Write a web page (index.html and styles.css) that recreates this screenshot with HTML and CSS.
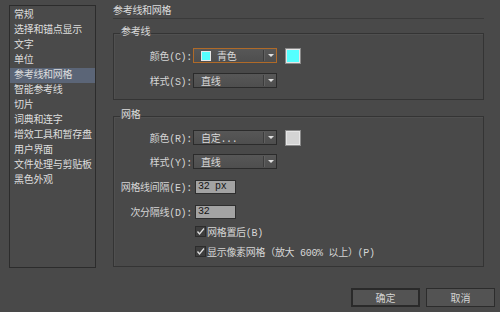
FILE: index.html
```html
<!DOCTYPE html>
<html>
<head>
<meta charset="UTF-8">
<title>首选项 - 参考线和网格</title>
<link rel="stylesheet" href="styles.css">
</head>
<body>

<div class="dialog">
	<div class="top">
		<ul class="sidebar">
			<li>常规</li>
			<li>选择和锚点显示</li>
			<li>文字</li>
			<li>单位</li>
			<li class="on">参考线和网格</li>
			<li>智能参考线</li>
			<li>切片</li>
			<li>词典和连字</li>
			<li>增效工具和暂存盘</li>
			<li>用户界面</li>
			<li>文件处理与剪贴板</li>
			<li>黑色外观</li>
		</ul>

		<div class="main">
			<div class="title">参考线和网格</div>

			<fieldset class="group g1">
				<legend>参考线</legend>
				<div class="row">
					<span class="lbl">颜色(C):</span>
					<div class="select focus"><i class="chip cyan"></i><span class="val">青色</span><b class="arrow"></b></div>
					<span class="swatch cyan"></span>
				</div>
				<div class="row r2">
					<span class="lbl">样式(S):</span>
					<div class="select"><span class="val">直线</span><b class="arrow"></b></div>
				</div>
			</fieldset>

			<fieldset class="group g2">
				<legend>网格</legend>
				<div class="row">
					<span class="lbl">颜色(R):</span>
					<div class="select"><span class="val">自定...</span><b class="arrow"></b></div>
					<span class="swatch grey"></span>
				</div>
				<div class="row r2">
					<span class="lbl">样式(Y):</span>
					<div class="select"><span class="val">直线</span><b class="arrow"></b></div>
				</div>
				<div class="row r3">
					<span class="lbl">网格线间隔(E):</span>
					<input type="text" class="num" value="32 px">
				</div>
				<div class="row r3">
					<span class="lbl">次分隔线(D):</span>
					<input type="text" class="num" value="32">
				</div>
				<div class="row r4 check">
					<svg width="11" height="11" viewBox="0 0 11 11"><rect x="0.5" y="0.5" width="10" height="10" fill="#3e3e3e" stroke="#2c2c2c"/><path d="M2.5 5.5 L4.5 8 L9 2.5" fill="none" stroke="#dcdcdc" stroke-width="1.3"/></svg>
					<span>网格置后(B)</span>
				</div>
				<div class="row r4 check">
					<svg width="11" height="11" viewBox="0 0 11 11"><rect x="0.5" y="0.5" width="10" height="10" fill="#3e3e3e" stroke="#2c2c2c"/><path d="M2.5 5.5 L4.5 8 L9 2.5" fill="none" stroke="#dcdcdc" stroke-width="1.3"/></svg>
					<span>显示像素网格（放大 600% 以上）(P)</span>
				</div>
			</fieldset>
		</div>
	</div>

	<div class="footer">
		<button class="btn def">确定</button>
		<button class="btn">取消</button>
	</div>
</div>

</body>
</html>
```

FILE: styles.css
```css
*{
	box-sizing: border-box;
}
html, body{
	margin: 0;
	background-color: #494949;
}
body{
	width: 500px;
	height: 312px;
	overflow: hidden;
	font-family: "Liberation Mono", "Noto Sans CJK SC", monospace;
	font-size: 10px;
	letter-spacing: -0.3px;
	color: #d6d6d6;
}
.dialog{
	padding: 5px 0 0 9px;
}
.top{
	display: flex;
}

/* left list */
.sidebar{
	list-style: none;
	margin: 0;
	width: 87px;
	height: 263px;
	padding: 2px 0 0 0;
	border: 1px solid #2c2c2c;
	background-color: #4a4a4a;
}
.sidebar li{
	height: 15px;
	line-height: 15px;
	padding-left: 4px;
	white-space: nowrap;
	color: #dedede;
}
.sidebar li.on{ background-color: #5b6577; }

/* right side */
.main{
	margin-left: 17px;
	width: 371px;
}
.title{
	margin-top: 1px;
	height: 13px;
	line-height: 12px;
	border-bottom: 1px solid #3a3a3a;
	color: #dcdcdc;
}
.group{
	margin: 0;
	min-width: 0;
	padding: 9px 0 11px 0;
	border: 1px solid #343434;
	box-shadow: inset 1px 1px 0 #505050;
}
.group legend{
	margin-left: 6px;
	padding: 0 1px;
	line-height: 12px;
	color: #dcdcdc;
}
.g1{ margin-top: 8px; }
.g2{
	margin-top: 10px;
	padding: 8px 0 7px 0;
}

.row{
	display: flex;
	align-items: center;
	height: 15px;
}
.g1 .r2{ margin-top: 10px; }
.g2 .r2{ margin-top: 9px; }
.g2 .r3{ margin-top: 10px; }
.g2 .r4{ margin-top: 5px; }
.lbl{
	width: 79px;
	padding-right: 1px;
	text-align: right;
	white-space: nowrap;
}

/* dropdowns */
.select{
	display: flex;
	align-items: center;
	width: 84px;
	height: 15px;
	border: 1px solid #2b2b2b;
	background: linear-gradient(#575757, #4e4e4e);
}
.select.focus{ border-color: #b06a28; }
.select .val{
	flex: 1;
	padding-left: 7px;
	white-space: nowrap;
	color: #dadada;
}
.chip{
	width: 10px;
	height: 10px;
	margin-left: 7px;
	margin-right: -1px;
	border: 1px solid #e8e8e8;
}
.cyan{ background-color: #55ffff; }
.grey{ background-color: #d4d4d4; }
.arrow{
	position: relative;
	width: 13px;
	height: 11px;
	border-left: 1px solid #3c3c3c;
	box-shadow: inset 1px 0 0 #606060;
}
.arrow::after{
	content: "";
	position: absolute;
	left: 4px;
	top: 4px;
	border-left: 3px solid transparent;
	border-right: 3px solid transparent;
	border-top: 3px solid #e0e0e0;
}
.swatch{
	width: 16px;
	height: 16px;
	margin-left: 8px;
	border: 1px solid #8a8a8a;
	box-shadow: inset 0 0 0 1px #e6e6e6;
}

/* number inputs */
.num{
	width: 41px;
	height: 14px;
	margin: 0 0 0 2px;
	padding: 0 0 0 2px;
	border: 1px solid #2e2e2e;
	background-color: #a3a3a3;
	font-family: "Liberation Mono", "Noto Sans CJK SC", monospace;
	font-size: 10px;
	letter-spacing: -0.3px;
	color: #151515;
}

/* checkboxes */
.check{ padding-left: 81px; }
.check svg{ margin-right: 1px; }

/* buttons */
.footer{
	display: flex;
	justify-content: flex-end;
	gap: 6px;
	margin-top: 20px;
	padding-right: 5px;
}
.btn{
	width: 69px;
	height: 19px;
	padding: 0;
	border: 1px solid #2c2c2c;
	background-color: #535353;
	font-family: "Noto Sans CJK SC", sans-serif;
	font-size: 10px;
	color: #d4d4d4;
}
.btn.def{
	border: 2px solid #2a2a2a;
}
```
